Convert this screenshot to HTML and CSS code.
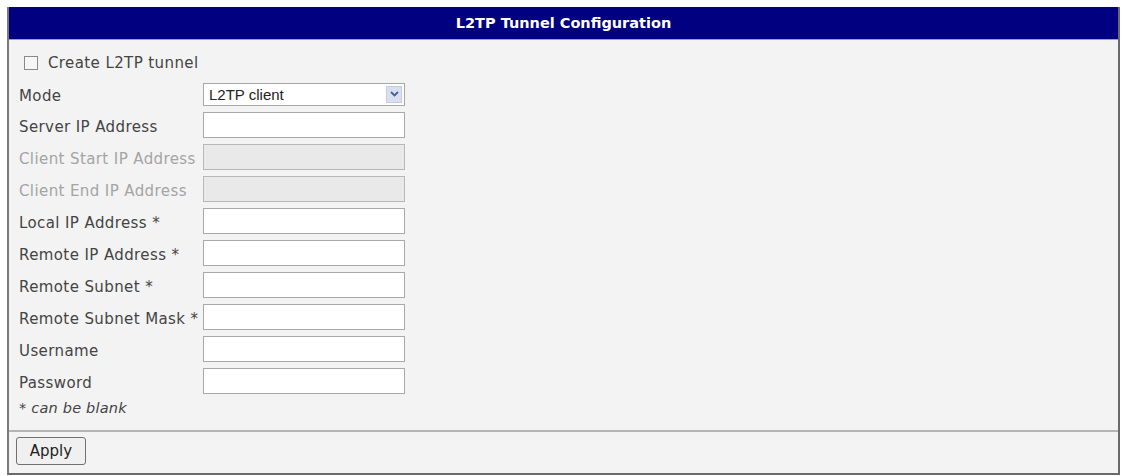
FILE: index.html
```html
<!DOCTYPE html>
<html>
<head>
<meta charset="utf-8">
<link rel="stylesheet" href="styles.css">
</head>
<body>
<div class="panel">
  <div class="title">L2TP Tunnel Configuration</div>
  <div class="content">
    <label class="check-row"><span class="checkbox"></span><span>Create L2TP tunnel</span></label>
    <div class="row mode">
      <span class="label">Mode</span>
      <div class="select"><span class="select-text">L2TP client</span><span class="select-btn"><svg width="9" height="6" viewBox="0 0 9 6"><path d="M1 1 L4.5 4.5 L8 1" fill="none" stroke="#4a5f9a" stroke-width="1.8"/></svg></span></div>
    </div>
    <div class="row"><span class="label">Server IP Address</span><span class="input"></span></div>
    <div class="row disabled"><span class="label">Client Start IP Address</span><span class="input"></span></div>
    <div class="row disabled"><span class="label">Client End IP Address</span><span class="input"></span></div>
    <div class="row"><span class="label">Local IP Address *</span><span class="input"></span></div>
    <div class="row"><span class="label">Remote IP Address *</span><span class="input"></span></div>
    <div class="row"><span class="label">Remote Subnet *</span><span class="input"></span></div>
    <div class="row"><span class="label">Remote Subnet Mask *</span><span class="input"></span></div>
    <div class="row"><span class="label">Username</span><span class="input"></span></div>
    <div class="row"><span class="label">Password</span><span class="input"></span></div>
    <div class="note">* <i>can be blank</i></div>
  </div>
  <div class="footer">
    <span class="button">Apply</span>
  </div>
</div>
</body>
</html>
```

FILE: styles.css
```css
html, body {
  margin: 0;
  padding: 0;
  background: #ffffff;
}
body {
  font-family: "DejaVu Sans", Verdana, sans-serif;
  font-size: 15px;
  letter-spacing: 0.4px;
  color: #444;
}
.panel {
  margin: 7px 0 0 7px;
  width: 1109px;
  height: 466px;
  border-left: 2px solid #7a7a7a;
  border-right: 2px solid #6a6a6a;
  border-bottom: 2px solid #6a6a6a;
  background: #f3f3f3;
  display: flex;
  flex-direction: column;
}
.title {
  height: 33px;
  background: #000080;
  border-bottom: 1px solid #9a9ad0;
  color: #fff;
  font-weight: bold;
  font-size: 14.5px;
  letter-spacing: 0;
  display: flex;
  align-items: center;
  justify-content: center;
  box-sizing: border-box;
}
.content {
  padding: 14px 0 0 10px;
  flex: 1;
}
.check-row {
  display: flex;
  align-items: center;
  gap: 10px;
  height: 17px;
  padding-left: 5px;
  margin-bottom: 11px;
}
.checkbox {
  width: 12px;
  height: 12px;
  border: 1px solid #8a8a8a;
  background: #f6f6f6;
}
.row {
  display: flex;
  align-items: center;
  height: 26px;
  margin-bottom: 6px;
}
.row.mode {
  height: 24px;
}
.label {
  width: 184px;
  flex: none;
  white-space: nowrap;
  padding-top: 3px;
}
.input {
  width: 200px;
  height: 24px;
  border: 1px solid #a8a8a8;
  background: #fff;
}
.disabled .label {
  color: #a4a4a4;
}
.disabled .input {
  background: #e9e9e9;
  border-color: #b8b8b8;
}
.select {
  height: 21px;
  border: 1px solid #a8a8a8;
  background: #fff;
  display: flex;
  align-items: center;
  justify-content: space-between;
  padding: 0 2px 0 5px;
  box-sizing: content-box;
  width: 193px;
}
.select-text {
  font-family: "Liberation Sans", Arial, sans-serif;
  font-size: 15px;
  letter-spacing: 0;
  color: #222;
}
.select-btn {
  width: 16px;
  height: 17px;
  background: #d8e0f0;
  border: 1px solid #c4cde0;
  display: flex;
  align-items: center;
  justify-content: center;
  box-sizing: border-box;
}
.note {
  height: 16px;
  line-height: 16px;
  color: #444;
  font-size: 14.5px;
  letter-spacing: 0.2px;
}
.note i {
  font-style: italic;
}
.footer {
  border-top: 2px solid #b4b4b4;
  height: 43px;
  padding: 5px 0 0 7px;
  box-sizing: border-box;
}
.button {
  display: inline-flex;
  align-items: center;
  justify-content: center;
  width: 68px;
  height: 26px;
  border: 1px solid #707070;
  border-radius: 3px;
  background: #f0f0f0;
  color: #222;
  font-size: 15px;
  letter-spacing: 0;
}
```
